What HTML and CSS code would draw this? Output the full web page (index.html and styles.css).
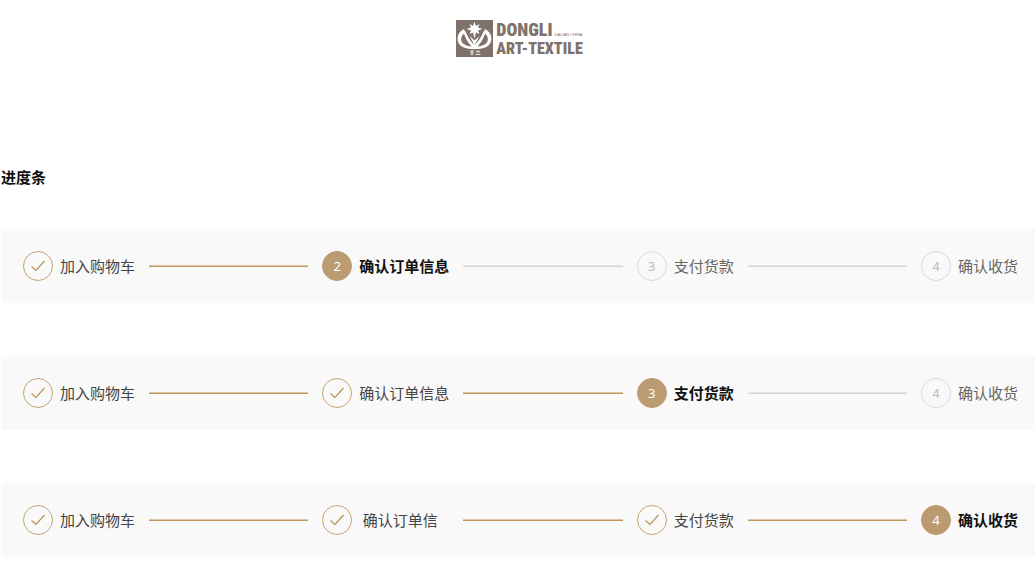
FILE: index.html
```html
<!DOCTYPE html>
<html lang="zh-CN">
<head>
<meta charset="utf-8">
<meta name="viewport" content="width=device-width, initial-scale=1">
<title>进度条</title>
<link rel="stylesheet" href="styles.css">
</head>
<body>
<svg class="defs" aria-hidden="true">
  <symbol id="check" viewBox="0 0 30 30"><path d="M8.500 15.500l4.500 4L21.500 10" fill="none" stroke="currentColor" stroke-width="1.200"/></symbol>
</svg>
<header class="brand">
  <svg class="brand-mark" viewBox="0 0 37 37" aria-hidden="true">
    <path class="mark-bg" d="M0 0h37v37H0z"/>
    <path class="mark-fg" d="M8 9C0 13 0 22 5 26c3.500 2.500 8.500 3 13.500 3s10-.5 13.500-3c5-4 5-13-3-17-1.500 6-5 11-10.500 16C13 20 9.500 15 8 9z"/>
    <path class="mark-cut" d="M8 13.500c1.500 5 4 9 7.500 13C11 26 7 24.500 5.500 21.500c-1-3 0-6 2.500-8zM29 13.500c-1.500 5-4 9-7.500 13 4.500-.5 8.500-2 10-5 1-3 0-6-2.500-8z"/>
    <path class="mark-stroke" d="M8.500 11.500c2 6 5.500 11 10 15.500 4.500-4.500 8-9.500 10-15.500"/>
    <path class="mark-fg" d="M13.500 16l5 4.500 5-4.500-5 9z"/>
    <path class="mark-fg" d="M18.500 1.500l1.500 4.500 3.500-2-1.500 3.500 4.500 1.500-4.500 1.500 1.500 3.500-3.500-1.500-1.500 6-1.500-6-3.500 1.500 1.500-3.500-4.500-1.500 4.500-1.500L13.500 4 17 6z"/>
    <path class="mark-line" d="M14 31h4M14.500 32.500h3M16 30v5M14.500 35l1.500-1.500 1.500 1.500M20 31.500h4M22 30v1.500M19.500 34.500h5M21 32.500v1M23 32.500v1"/>
  </svg>
  <div class="brand-name">
    <div class="brand-row brand-top"><span>DONGLI</span><small class="brand-place">DALIAN CHINA</small></div>
    <div class="brand-row">ART-TEXTILE</div>
  </div>
</header>
<main class="content">
  <h1 class="title">进度条</h1>
  <div class="bars">
    <ol class="steps">
      <li class="step done"><span class="dot"><svg><use href="#check"/></svg></span><span class="label">加入购物车</span></li>
      <li class="step current" aria-current="step"><span class="dot">2</span><span class="label">确认订单信息</span></li>
      <li class="step"><span class="dot">3</span><span class="label">支付货款</span></li>
      <li class="step"><span class="dot">4</span><span class="label">确认收货</span></li>
    </ol>
    <ol class="steps">
      <li class="step done"><span class="dot"><svg><use href="#check"/></svg></span><span class="label">加入购物车</span></li>
      <li class="step done"><span class="dot"><svg><use href="#check"/></svg></span><span class="label">确认订单信息</span></li>
      <li class="step current" aria-current="step"><span class="dot">3</span><span class="label">支付货款</span></li>
      <li class="step"><span class="dot">4</span><span class="label">确认收货</span></li>
    </ol>
    <ol class="steps">
      <li class="step done"><span class="dot"><svg><use href="#check"/></svg></span><span class="label">加入购物车</span></li>
      <li class="step done"><span class="dot"><svg><use href="#check"/></svg></span><span class="label">&nbsp;确认订单信</span></li>
      <li class="step done"><span class="dot"><svg><use href="#check"/></svg></span><span class="label">支付货款</span></li>
      <li class="step current" aria-current="step"><span class="dot">4</span><span class="label">确认收货</span></li>
    </ol>
  </div>
</main>
</body>
</html>
```
FILE: styles.css
```css
*, *::after { box-sizing: border-box; }
body {
  margin: 0;
  background: #fff;
  color: #333;
  font-family: "Noto Sans CJK SC", sans-serif;
  font-size: 15px;
}
.defs { display: none; }

.brand {
  display: flex;
  justify-content: center;
  gap: 3px;
  padding: 20px 0 0 4px;
  color: #80716a;
}
.brand-mark { width: 37px; height: 37px; }
.mark-bg, .mark-cut { fill: #80716a; }
.mark-fg { fill: #fff; }
.mark-stroke { fill: none; stroke: #fff; stroke-width: 2; }
.mark-line { fill: none; stroke: #fff; stroke-width: 0.7; }
.brand-name {
  font-family: "Roboto Condensed", "Liberation Sans Narrow", "Liberation Sans", sans-serif;
  font-size: 16px;
  font-weight: 900;
  line-height: 19px;
  white-space: nowrap;
}
.brand-row { display: flex; align-items: center; gap: 2px; }
.brand-top { font-size: 18px; }
.brand-place {
  padding-top: 10px;
  font-family: "Liberation Sans", sans-serif;
  font-size: 4px;
  font-weight: 400;
  line-height: 9px;
}

.content { padding: 108px 0 12px 1px; }
.title {
  margin: 0 0 41px;
  color: #111;
  font-size: 15px;
  line-height: 22px;
}
.bars { display: grid; gap: 53px; }
.steps {
  display: flex;
  align-items: center;
  margin: 0;
  padding: 22px 17px 22px 22px;
  border-radius: 3px 0 0 3px;
  background: #f9f9f9;
  list-style: none;
}
.step {
  display: flex;
  flex: 1 1 auto;
  align-items: center;
  color: #666;
  white-space: nowrap;
}
.step:last-child { flex: none; }
.step:not(:last-child)::after {
  content: "";
  flex: 1;
  height: 2px;
  margin: 0 14px;
  border-top: 1px solid #e6e6e6;
  background: #d4d4d4;
}
.step.done:not(:last-child)::after {
  border-color: #dcc6a6;
  background: #c0965c;
}
.step:nth-child(2) .label { min-width: 6em; }
.dot {
  display: flex;
  align-items: center;
  justify-content: center;
  width: 30px;
  height: 30px;
  margin-right: 7px;
  border: 1px solid #dadada;
  border-radius: 50%;
  color: #bbb;
  font-family: "Noto Sans", sans-serif;
  font-size: 13px;
}
.dot svg { flex: none; width: 30px; height: 30px; }
.label { line-height: 22px; }
.done { color: #444; }
.done .dot { border-color: #c6a26f; color: #bd9055; }
.current { color: #111; font-weight: 700; }
.current .dot {
  border-color: #bb9c72;
  background: #bb9c72;
  color: #fff;
  font-weight: 400;
}
```
